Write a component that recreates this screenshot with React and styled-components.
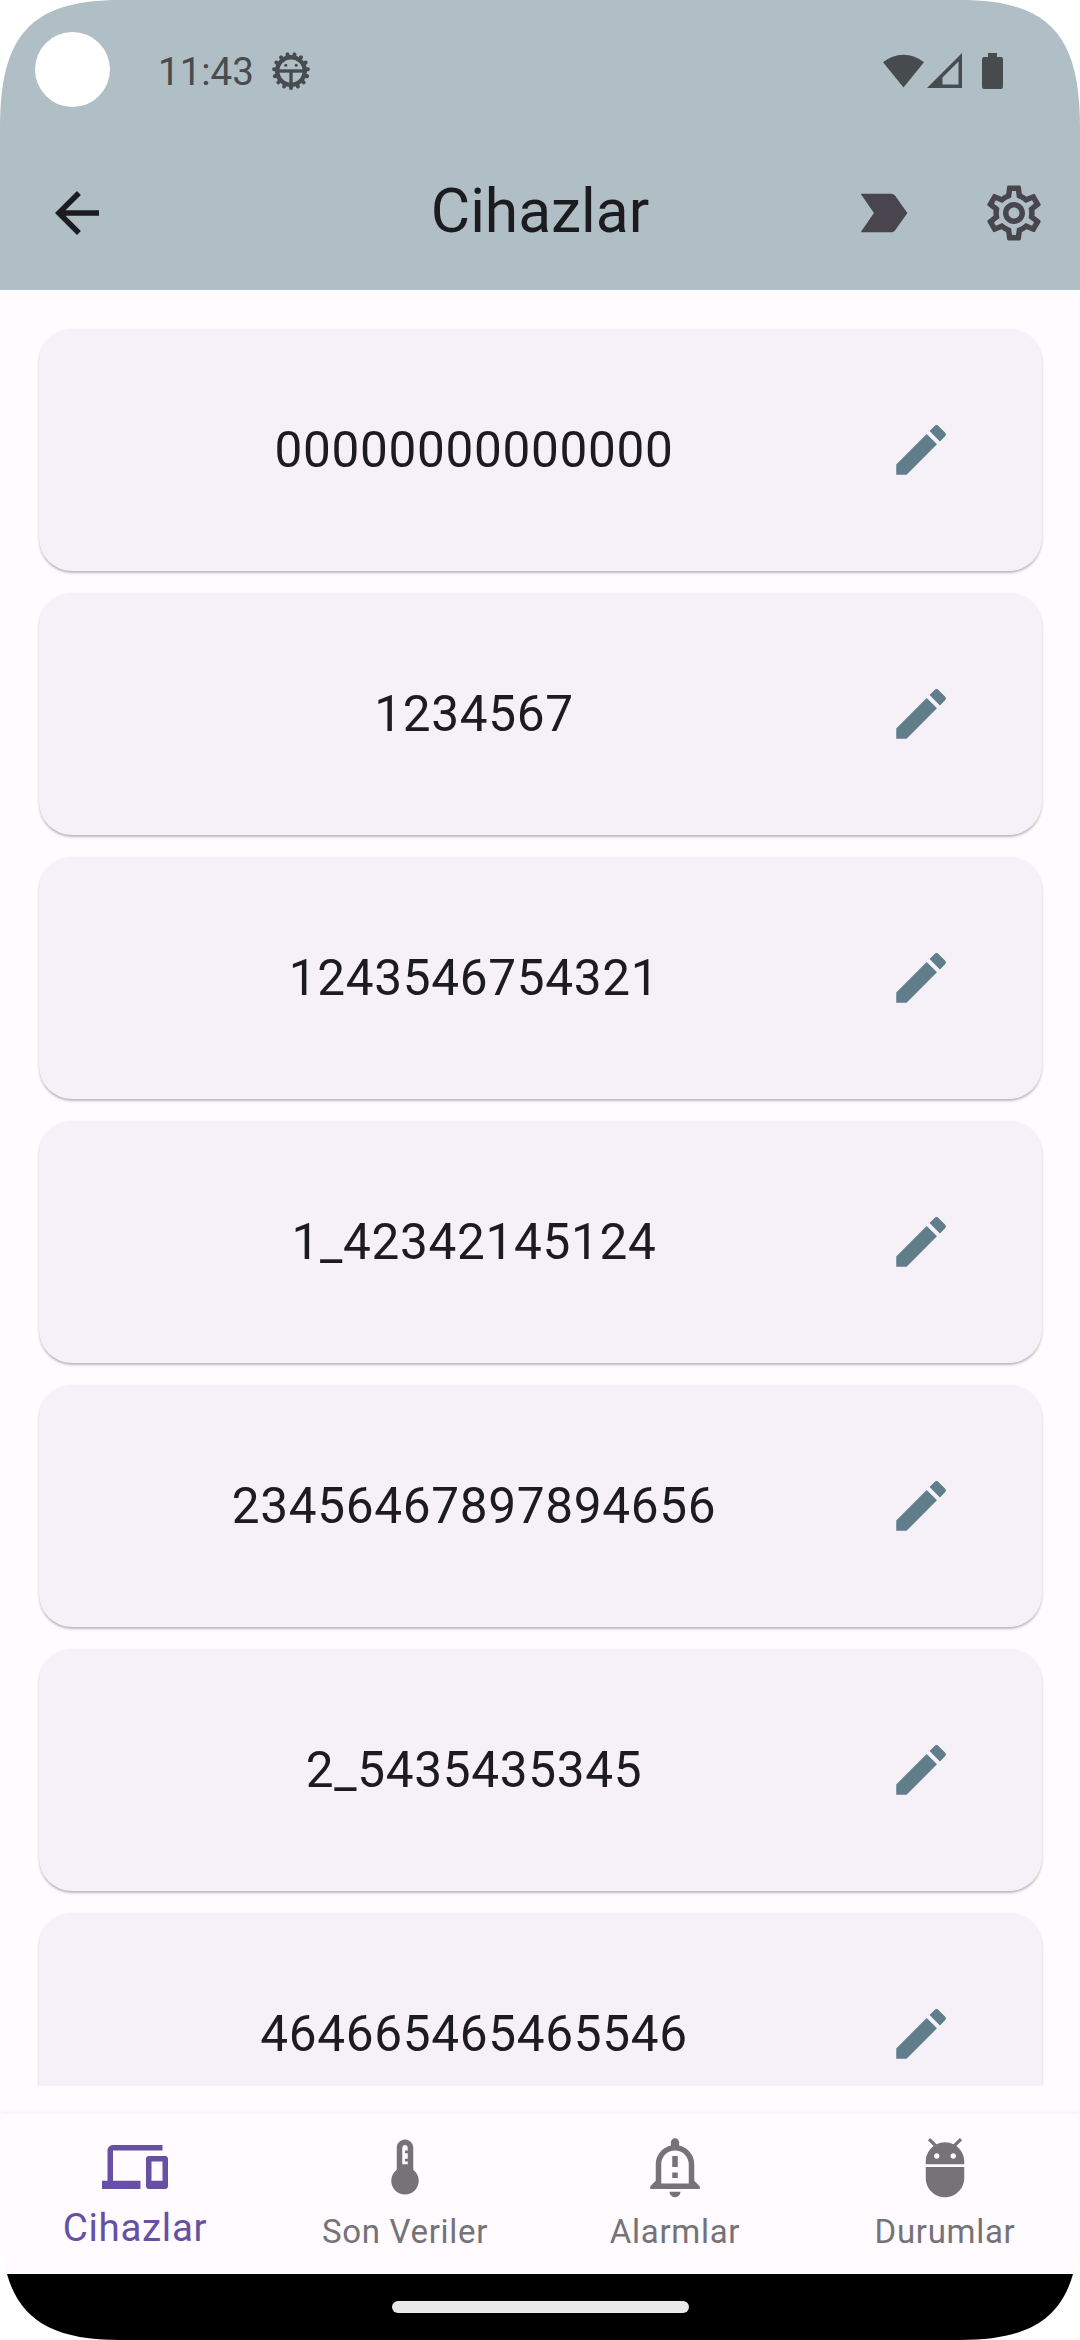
import React from "react";
import styled, { createGlobalStyle } from "styled-components";
import {
  MdArrowBack,
  MdLabelImportant,
  MdOutlineSettings,
  MdEdit,
  MdDevices,
  MdThermostat,
  MdAdb,
} from "react-icons/md";

const Global = createGlobalStyle`
  * { box-sizing: border-box; }
  html, body { margin: 0; background: #fff; }
`;

const Screen = styled.div`
  width: 1080px;
  height: 2340px;
  display: flex;
  flex-direction: column;
  overflow: hidden;
  background: #fffbff;
  color: #1c1b1f;
  font-family: Roboto, "Liberation Sans", sans-serif;
  clip-path: path("M0 128 C0 36 30 0 120 0 H960 C1050 0 1080 36 1080 128 V2212 C1080 2304 1050 2340 960 2340 H120 C30 2340 0 2304 0 2212 Z");
`;

const Header = styled.header`
  flex: none;
  height: 290px;
  background: #b0bec5;
`;

const StatusBar = styled.div`
  height: 136px;
  display: flex;
  align-items: center;
  padding: 6px 77px 0 35px;
  color: #484c4f;
`;

const Camera = styled.div`
  width: 75px;
  height: 75px;
  margin-top: -3px;
  border-radius: 50%;
  background: #fff;
`;

const Clock = styled.span`
  margin-left: 48px;
  padding-top: 2px;
  font-size: 38.5px;
  line-height: 46px;
  width: 98px;
`;

const StatusIcons = styled.div`
  margin-left: auto;
  display: flex;
  align-items: flex-start;
`;

const Glyph = styled.svg`
  display: block;
  flex: none;
  margin-left: ${(p) => p.$left || 0}px;
`;

const AppBar = styled.div`
  height: 154px;
  display: grid;
  grid-template-columns: 1fr auto 1fr;
  align-items: center;
  padding: 0 33px;
`;

const Leading = styled.div`
  display: flex;
  padding-left: 11px;
`;

const Title = styled.h1`
  margin: 0;
  padding-bottom: 3px;
  font-size: 60.5px;
  line-height: 77px;
  font-weight: 400;
`;

const Actions = styled.div`
  display: flex;
  justify-content: flex-end;
  gap: 64.5px;
  color: #49454f;
`;

const List = styled.main`
  flex: none;
  height: 1796px;
  padding: 38.5px 38.5px 0;
  display: flex;
  flex-direction: column;
  gap: 22px;
  overflow: hidden;
`;

const Card = styled.article`
  flex: none;
  height: 242px;
  border-radius: 33px;
  background: #f6f1f8;
  box-shadow: 0 2.75px 2.75px -1px rgba(0, 0, 0, 0.2), 0 1px 3px rgba(0, 0, 0, 0.14);
  display: flex;
  align-items: center;
  padding: 0 88px 0 44px;
`;

const DeviceId = styled.span`
  flex: 1;
  text-align: center;
  font-size: 49.5px;
  letter-spacing: 0.69px;
  line-height: 71px;
  padding: 2px 22px 0 0;
`;

const NavBar = styled.nav`
  flex: none;
  margin-top: 28px;
  height: 160px;
  display: flex;
  background: #fffbff;
  box-shadow: 0 -2px 5px rgba(0, 0, 0, 0.05);
`;

const NavItem = styled.div`
  flex: 1;
  display: flex;
  flex-direction: column;
  align-items: center;
  color: ${(p) => (p.$active ? "#6750a4" : "#757377")};
  padding-top: 20px;
`;

const NavLabel = styled.span`
  font-size: ${(p) => (p.$active ? 38.5 : 33)}px;
  line-height: ${(p) => (p.$active ? 55 : 47)}px;
  padding-top: ${(p) => (p.$active ? 0 : 8)}px;
  letter-spacing: 0.69px;
`;

const GestureArea = styled.footer`
  flex: 1;
  display: flex;
  justify-content: center;
  background: #000;
  padding-top: 27px;
`;

const GestureHandle = styled.div`
  width: 297px;
  height: 12px;
  border-radius: 6px;
  background: #e9e9e9;
`;

const teeth = Array.from({ length: 15 }, (_, i) => i * 24 + 12);

function DebugBadge() {
  return (
    <Glyph width="40" height="40" viewBox="-20 -20 40 40" $left={15} fill="none" stroke="currentColor">
      <circle r="13.8" strokeWidth="4.4" />
      {teeth.map((a) => (
        <path key={a} d="M0 -14.5 V-17" strokeWidth="4" strokeLinecap="round" transform={`rotate(${a})`} />
      ))}
      <path d="M-13 0 H13" strokeWidth="3.4" />
      <path d="M0 0 V13" strokeWidth="3.4" />
      <circle cx="-5.2" cy="-5.8" r="1.5" fill="currentColor" stroke="none" />
      <circle cx="5.2" cy="-5.8" r="1.5" fill="currentColor" stroke="none" />
    </Glyph>
  );
}

function AlertBell() {
  return (
    <svg width="66" height="66" viewBox="0 0 24 24" fill="currentColor">
      <path d="M10.01 21.01c0 1.1.89 1.99 1.99 1.99s1.99-.89 1.99-1.99h-3.98zM12 6c2.76 0 5 2.24 5 5v7H7v-7c0-2.76 2.24-5 5-5zm0-4.5c-.83 0-1.5.67-1.5 1.5v1.17C7.36 4.85 5 7.65 5 11v6l-2 2v1h18v-1l-2-2v-6c0-3.35-2.36-6.15-5.5-6.83V3c0-.83-.67-1.5-1.5-1.5zM11 8h2v4h-2zm0 6h2v2h-2z" />
    </svg>
  );
}

const devices = [
  "00000000000000",
  "1234567",
  "1243546754321",
  "1_42342145124",
  "23456467897894656",
  "2_5435435345",
  "464665465465546",
];

const tabs = [
  { label: "Cihazlar", icon: <MdDevices size={66} />, active: true },
  { label: "Son Veriler", icon: <MdThermostat size={66} /> },
  { label: "Alarmlar", icon: <AlertBell /> },
  { label: "Durumlar", icon: <MdAdb size={66} /> },
];

export default function App() {
  return (
    <Screen>
      <Global />
      <Header>
        <StatusBar>
          <Camera />
          <Clock>11:43</Clock>
          <DebugBadge />
          <StatusIcons>
            <Glyph width="41" height="35" viewBox="0 0 41 35" fill="currentColor">
              <path d="M0 9.3 A32 32 0 0 1 41 9.3 L20.5 34.5Z" />
            </Glyph>
            <Glyph width="35" height="35" viewBox="0 0 35 35" fill="currentColor" $left={3}>
              <path fillRule="evenodd" d="M35 0 V35 H0Z M31.5 8.5 L15.5 24.5 V31.5 H31.5Z" />
            </Glyph>
            <Glyph width="21" height="36" viewBox="0 0 21 36" fill="currentColor" $left={20}>
              <path d="M6 0 H15 V4 H19 Q21 4 21 6 V34 Q21 36 19 36 H2 Q0 36 0 34 V6 Q0 4 2 4 H6Z" />
            </Glyph>
          </StatusIcons>
        </StatusBar>
        <AppBar>
          <Leading>
            <MdArrowBack size={66} />
          </Leading>
          <Title>Cihazlar</Title>
          <Actions>
            <MdLabelImportant size={66} />
            <MdOutlineSettings size={66} />
          </Actions>
        </AppBar>
      </Header>
      <List>
        {devices.map((id) => (
          <Card key={id}>
            <DeviceId>{id}</DeviceId>
            <MdEdit size={66} color="#607d8b" />
          </Card>
        ))}
      </List>
      <NavBar>
        {tabs.map((t) => (
          <NavItem key={t.label} $active={t.active}>
            {t.icon}
            <NavLabel $active={t.active}>{t.label}</NavLabel>
          </NavItem>
        ))}
      </NavBar>
      <GestureArea>
        <GestureHandle />
      </GestureArea>
    </Screen>
  );
}
